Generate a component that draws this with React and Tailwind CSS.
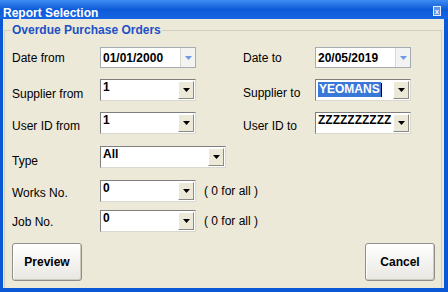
import React from 'react'

// small down triangle used by the combo + date pickers
function Tri({ fill }) {
  return (
    <svg width="7" height="4" viewBox="0 0 7 4">
      <polygon points="0,0 7,0 3.5,4" fill={fill} />
    </svg>
  )
}

function DateBox({ value }) {
  return (
    <div className="flex h-[21px] w-[96px] border border-[#a5acb2] bg-white">
      <div className="flex flex-1 items-center pl-[2px] text-[12px] font-bold leading-[14px]">{value}</div>
      <div className="flex w-[15px] items-center justify-center border-l border-[#d8d8d2] bg-[#f3f3f1]">
        <Tri fill="#6a9be6" />
      </div>
    </div>
  )
}

function Combo({ value, width, selected }) {
  return (
    <div
      className={`flex h-[22px] ${width} border border-t-[#7f7f7f] border-l-[#7f7f7f] border-r-[#d9d8d0] border-b-[#d9d8d0] bg-white`}
    >
      <div className="flex-1 overflow-hidden whitespace-nowrap pl-[2px] text-[12px] font-bold leading-[14px]">
        {selected ? (
          <span className="mt-[2px] inline-flex items-center">
            <span className="inline-block bg-[#3a78d8] px-[1px] leading-[15px] text-white">{value}</span>
            <span className="inline-block h-[14px] w-px bg-black" />
          </span>
        ) : (
          value
        )}
      </div>
      <div className="my-[1px] mr-[1px] flex w-[16px] items-center justify-center border border-t-white border-l-white border-r-[#8b8b85] border-b-[#8b8b85] bg-[#ece9d8]">
        <Tri fill="#000000" />
      </div>
    </div>
  )
}

function Btn({ children }) {
  return (
    <button
      type="button"
      className="h-[38px] w-[70px] rounded-[3px] border border-[#8e8f8a] bg-gradient-to-b from-[#ffffff] to-[#e8e7e1] text-[12px] font-bold text-black shadow-[inset_1px_1px_0_#ffffff,inset_-1px_-1px_0_#cdcbbf]"
    >
      {children}
    </button>
  )
}

export default function App() {
  const label = 'text-[12px] leading-[14px] text-black'

  return (
    <div className="flex h-[292px] w-[448px] flex-col bg-[#0b58d6] font-['Liberation_Sans',Arial,sans-serif]">
      {/* TITLE BAR */}
      <div className="flex h-[19px] items-start bg-gradient-to-b from-[#3d8cf2] via-[#0c5bd9] to-[#1765e2] pl-[3px] pr-[7px] pt-[6px]">
        <span className="flex-1 text-[12px] font-bold leading-[14px] text-white">Report Selection</span>
        <div className="-mt-[0px] flex h-[10px] w-[8px] items-center justify-center border border-[#e6eeff] bg-[#5c95ee] text-[7px] font-bold leading-none text-white">
          x
        </div>
      </div>

      {/* BODY */}
      <div className="ml-[3px] mr-[4px] mb-[4px] flex flex-1 flex-col bg-[#ece9d8] pl-px pr-[2px]">
        <div className="mt-[11px] flex flex-1 flex-col border-x border-t border-[#d0d0bf]">
          {/* legend */}
          <div className="-mt-[8px] ml-[6px] flex">
            <span className="bg-[#ece9d8] px-px text-[12px] font-bold leading-[14px] text-[#2150c6]">
              Overdue Purchase Orders
            </span>
          </div>

          <div className="flex flex-col pl-[7px]">
            {/* Date row */}
            <div className="mt-[10px] flex items-center">
              <div className="flex w-[231px] items-center">
                <span className={`${label} w-[88px] pt-[1px]`}>Date from</span>
                <DateBox value="01/01/2000" />
              </div>
              <span className={`${label} w-[72px]`}>Date to</span>
              <DateBox value="20/05/2019" />
            </div>

            {/* Supplier row */}
            <div className="mt-[11px] flex items-center">
              <div className="flex w-[231px] items-center">
                <span className={`${label} w-[88px] pt-[7px]`}>Supplier from</span>
                <Combo value="1" width="w-[96px]" />
              </div>
              <span className={`${label} w-[72px] pt-[5px]`}>Supplier to</span>
              <Combo value="YEOMANS" width="w-[96px]" selected />
            </div>

            {/* User ID row */}
            <div className="mt-[11px] flex items-center">
              <div className="flex w-[231px] items-center">
                <span className={`${label} w-[88px] pt-[6px]`}>User ID from</span>
                <Combo value="1" width="w-[96px]" />
              </div>
              <span className={`${label} w-[72px] pt-[6px]`}>User ID to</span>
              <Combo value="ZZZZZZZZZZ" width="w-[96px]" />
            </div>

            {/* Type */}
            <div className="mt-[12px] flex items-center">
              <span className={`${label} w-[88px] pt-[7px]`}>Type</span>
              <Combo value="All" width="w-[126px]" />
            </div>

            {/* Works No */}
            <div className="mt-[12px] flex items-center">
              <span className={`${label} w-[88px] pt-[3px]`}>Works No.</span>
              <Combo value="0" width="w-[96px]" />
              <span className={`${label} ml-[8px]`}>( 0 for all )</span>
            </div>

            {/* Job No */}
            <div className="mt-[8px] flex items-center">
              <span className={`${label} w-[88px] pt-[1px]`}>Job No.</span>
              <Combo value="0" width="w-[96px]" />
              <span className={`${label} ml-[8px]`}>( 0 for all )</span>
            </div>
          </div>

          {/* BUTTONS */}
          <div className="mt-[11px] flex justify-between pl-[7px] pr-[6px]">
            <Btn>Preview</Btn>
            <Btn>Cancel</Btn>
          </div>
        </div>
      </div>
    </div>
  )
}
